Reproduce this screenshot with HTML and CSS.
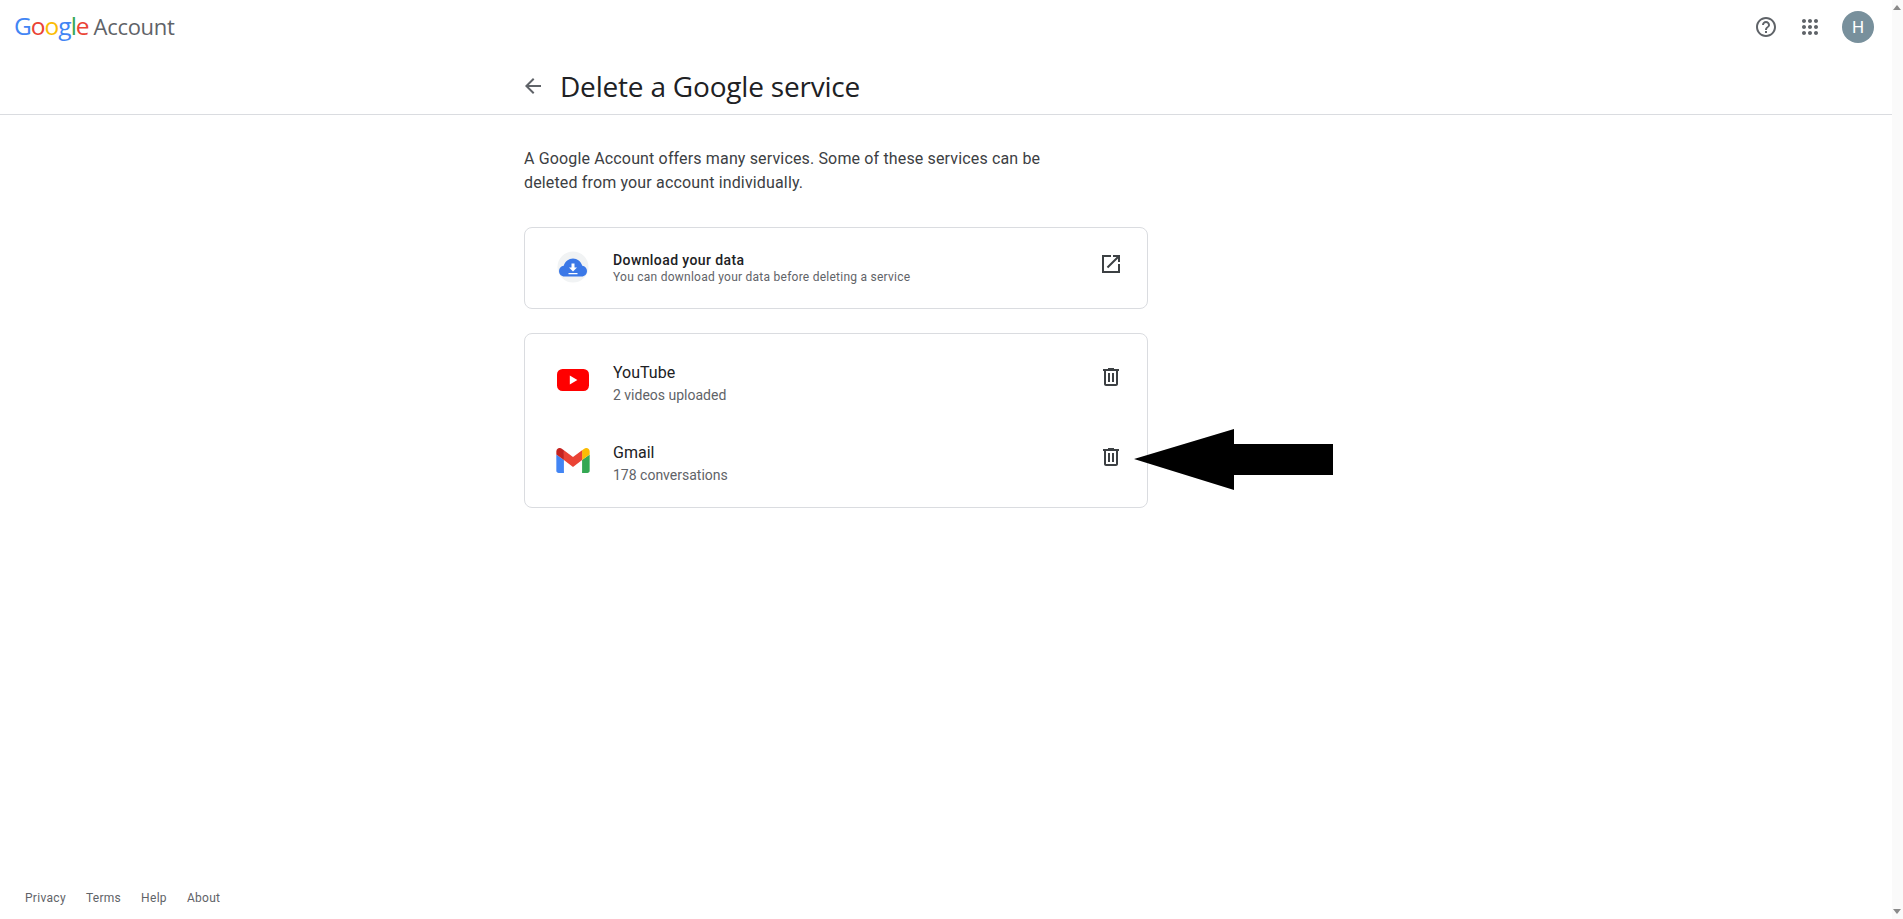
FILE: index.html
```html
<!DOCTYPE html>
<html lang="en">
<head>
<meta charset="utf-8">
<title>Delete a Google service</title>
<link rel="stylesheet" href="styles.css">
</head>
<body>
<div class="page">
  <header class="topbar">
    <div class="logo"><span class="wordmark"><span class="g-blue">G</span><span class="g-red">o</span><span class="g-yellow">o</span><span class="g-blue">g</span><span class="g-green">l</span><span class="g-red">e</span></span><span class="product">Account</span></div>
    <div class="top-actions">
      <svg class="icon-help" viewBox="0 0 24 24"><path d="M11 18h2v-2h-2v2zm1-16C6.48 2 2 6.48 2 12s4.48 10 10 10 10-4.48 10-10S17.52 2 12 2zm0 18c-4.41 0-8-3.59-8-8s3.59-8 8-8 8 3.59 8 8-3.59 8-8 8zm0-14c-2.21 0-4 1.79-4 4h2c0-1.1.9-2 2-2s2 .9 2 2c0 2-3 1.75-3 5h2c0-2.25 3-2.5 3-5 0-2.21-1.79-4-4-4z"/></svg>
      <svg class="icon-apps" viewBox="0 0 24 24"><path d="M6,8c1.1,0 2,-0.9 2,-2s-0.9,-2 -2,-2 -2,0.9 -2,2 0.9,2 2,2zM12,20c1.1,0 2,-0.9 2,-2s-0.9,-2 -2,-2 -2,0.9 -2,2 0.9,2 2,2zM6,20c1.1,0 2,-0.9 2,-2s-0.9,-2 -2,-2 -2,0.9 -2,2 0.9,2 2,2zM6,14c1.1,0 2,-0.9 2,-2s-0.9,-2 -2,-2 -2,0.9 -2,2 0.9,2 2,2zM12,14c1.1,0 2,-0.9 2,-2s-0.9,-2 -2,-2 -2,0.9 -2,2 0.9,2 2,2zM16,6c0,1.1 0.9,2 2,2s2,-0.9 2,-2 -0.9,-2 -2,-2 -2,0.9 -2,2zM12,8c1.1,0 2,-0.9 2,-2s-0.9,-2 -2,-2 -2,0.9 -2,2 0.9,2 2,2zM18,14c1.1,0 2,-0.9 2,-2s-0.9,-2 -2,-2 -2,0.9 -2,2 0.9,2 2,2zM18,20c1.1,0 2,-0.9 2,-2s-0.9,-2 -2,-2 -2,0.9 -2,2 0.9,2 2,2z"/></svg>
      <div class="avatar">H</div>
    </div>
  </header>

  <div class="titlebar">
    <svg class="icon-back" viewBox="0 0 24 24"><path d="M20 11H7.83l5.59-5.59L12 4l-8 8 8 8 1.41-1.41L7.83 13H20v-2z"/></svg>
    <h1 class="title">Delete a Google service</h1>
  </div>

  <main class="main">
    <p class="intro">A Google Account offers many services. Some of these services can be deleted from your account individually.</p>

    <section class="card card-download">
      <div class="service-icon">
        <svg class="icon-cloud" viewBox="0 0 32 32">
          <circle cx="16" cy="16" r="15.5" fill="#f1f3f4"/>
          <path fill="#3b78e7" d="M7.500 25.500C4.200 25.500 2 23 2 20c0-2.700 2-4.900 4.700-5.200C8 10.500 11.800 7.500 16 7.500c4.200 0 8 3 9.300 7.300C28 15.100 30 17.300 30 20c0 3-2.200 5.500-5.500 5.500z"/>
          <path fill="#fff" d="M14.500 12.500h3v4h2.500l-4 4-4-4h2.500zM11.500 22h9v1.300h-9z"/>
        </svg>
      </div>
      <div class="service-text download-text">
        <div class="download-name">Download your data</div>
        <div class="download-sub">You can download your data before deleting a service</div>
      </div>
      <svg class="icon-action icon-open" viewBox="0 0 24 24"><path d="M19 19H5V5h7V3H3v18h18v-9h-2v7zM14 3v2h3.590l-9.830 9.830 1.410 1.410L19 6.410V10h2V3h-7z"/></svg>
    </section>

    <section class="card card-services">
      <div class="service-row">
        <div class="service-icon service-icon-raised">
          <svg class="icon-youtube" viewBox="0 0 32 22">
            <rect width="32" height="22" rx="5.500" fill="#ff0000"/>
            <path fill="#fff" d="M12.800 6.600v8.800l7.600-4.400z"/>
          </svg>
        </div>
        <div class="service-text">
          <div class="service-name">YouTube</div>
          <div class="service-sub">2 videos uploaded</div>
        </div>
        <svg class="icon-action icon-trash" viewBox="0 0 24 24"><path d="M15 4V3H9v1H4v2h1v13c0 1.100.9 2 2 2h10c1.100 0 2-.9 2-2V6h1V4h-5zm2 15H7V6h10v13zM9 8h2v9H9zm4 0h2v9h-2z"/></svg>
      </div>
      <div class="service-row">
        <div class="service-icon service-icon-raised">
          <svg class="icon-gmail" viewBox="52 42 88 66">
            <path fill="#4285f4" d="M58 108h14V74L52 59v43c0 3.320 2.690 6 6 6"/>
            <path fill="#34a853" d="M120 108h14c3.320 0 6-2.690 6-6V59l-20 15"/>
            <path fill="#fbbc04" d="M120 48v26l20-15v-8c0-7.420-8.470-11.650-14.400-7.200"/>
            <path fill="#ea4335" d="M72 74V48l24 18 24-18v26L96 92"/>
            <path fill="#c5221f" d="M52 51v8l20 15V48l-5.600-4.200c-5.940-4.450-14.400-.22-14.400 7.200"/>
          </svg>
        </div>
        <div class="service-text">
          <div class="service-name">Gmail</div>
          <div class="service-sub">178 conversations</div>
        </div>
        <svg class="icon-action icon-trash" viewBox="0 0 24 24"><path d="M15 4V3H9v1H4v2h1v13c0 1.100.9 2 2 2h10c1.100 0 2-.9 2-2V6h1V4h-5zm2 15H7V6h10v13zM9 8h2v9H9zm4 0h2v9h-2z"/></svg>
      </div>
    </section>
  </main>

  <footer class="footer">
    <a class="foot-link">Privacy</a>
    <a class="foot-link">Terms</a>
    <a class="foot-link">Help</a>
    <a class="foot-link">About</a>
  </footer>

  <svg class="callout" viewBox="0 0 199 61"><path d="M0 30 100 0V15H199V46H100V61z"/></svg>
</div>
<div class="scrollbar">
  <span class="scroll-up"></span>
  <span class="scroll-down"></span>
</div>
</body>
</html>
```

FILE: styles.css
```css
* { box-sizing: border-box; }

html, body { height: 100%; }

body {
  margin: 0;
  display: flex;
  overflow: hidden;
  background: #fff;
  color: #202124;
  font-family: Roboto, "Liberation Sans", sans-serif;
}

.page {
  position: relative;
  flex: 1;
  height: 919px;
  display: flex;
  flex-direction: column;
}

.topbar {
  height: 54px;
  flex: none;
  display: flex;
  align-items: center;
  justify-content: space-between;
  padding: 0 18px 0 14px;
}

.logo { display: flex; align-items: baseline; margin-top: -3px; }

.wordmark {
  font-family: "Open Sans", sans-serif;
  font-size: 24.5px;
  letter-spacing: -1px;
}

.g-blue { color: #4285f4; }
.g-red { color: #ea4335; }
.g-yellow { color: #fbbc05; }
.g-green { color: #34a853; }

.product {
  margin-left: 5px;
  font-family: "Open Sans", sans-serif;
  font-size: 22px;
  letter-spacing: -.3px;
  color: #5f6368;
}

.top-actions { display: flex; align-items: center; }

.icon-help { width: 24px; height: 24px; fill: #5f6368; }
.icon-apps { width: 24px; height: 24px; fill: #5f6368; margin-left: 20px; }

.avatar {
  width: 32px;
  height: 32px;
  margin-left: 20px;
  border-radius: 50%;
  background: #78909c;
  color: #fff;
  font-size: 17px;
  line-height: 32px;
  text-align: center;
}

.titlebar {
  height: 61px;
  flex: none;
  display: flex;
  align-items: center;
  padding: 4px 0 0 521px;
  border-bottom: 1px solid #dadce0;
}

.icon-back { width: 24px; height: 24px; fill: #5f6368; }

.title {
  margin: 0 0 0 15px;
  font-family: "Open Sans", sans-serif;
  font-size: 28px;
  font-weight: 400;
  letter-spacing: -.2px;
}

.main {
  flex: 1;
  padding: 32px 0 0 524px;
}

.intro {
  width: 530px;
  margin: 0 0 32px;
  font-size: 16px;
  line-height: 24px;
  letter-spacing: .15px;
  color: #3c4043;
}

.card {
  width: 624px;
  border: 1px solid #dadce0;
  border-radius: 8px;
}

.card-download {
  height: 82px;
  display: flex;
  align-items: center;
  padding: 0 24px 2px 24px;
  margin-bottom: 24px;
}

.card-services { height: 175px; padding: 9px 24px 0 24px; }

.service-row {
  height: 80px;
  display: flex;
  align-items: center;
}

.service-icon {
  width: 48px;
  flex: none;
  display: flex;
  justify-content: center;
  margin-right: 16px;
}

.service-icon-raised { margin-bottom: 6px; }

.icon-cloud { width: 32px; height: 32px; }
.icon-youtube { width: 32px; height: 22px; }
.icon-gmail { width: 34px; height: 25px; }

.service-text { flex: 1; }

.download-text { margin-top: 2px; }

.download-name { font-size: 14px; line-height: 18px; font-weight: 500; letter-spacing: .4px; }
.download-sub { font-size: 12px; line-height: 16px; letter-spacing: .25px; color: #5f6368; }

.service-name { font-size: 16px; line-height: 24px; }
.service-sub { font-size: 14px; line-height: 20px; color: #5f6368; }

.icon-action { width: 24px; height: 24px; flex: none; fill: #3c4043; }
.icon-open { margin-bottom: 6px; }
.icon-trash { margin-bottom: 12px; }

.footer {
  height: 49px;
  flex: none;
  display: flex;
  gap: 20px;
  padding: 20px 0 0 25px;
}

.foot-link {
  font-size: 12px;
  line-height: 16px;
  letter-spacing: .3px;
  color: #5f6368;
}

.callout {
  position: absolute;
  left: 1134px;
  top: 429px;
  width: 199px;
  height: 61px;
  fill: #000;
}

.scrollbar {
  position: relative;
  width: 11px;
  height: 919px;
  flex: none;
  background: #fafafa;
}

.scroll-up, .scroll-down {
  position: absolute;
  left: 1px;
  width: 0;
  height: 0;
  border-left: 4px solid transparent;
  border-right: 4px solid transparent;
}

.scroll-up { top: 5px; border-bottom: 5px solid #8a8a8a; }
.scroll-down { bottom: 5px; border-top: 5px solid #8a8a8a; }
```
